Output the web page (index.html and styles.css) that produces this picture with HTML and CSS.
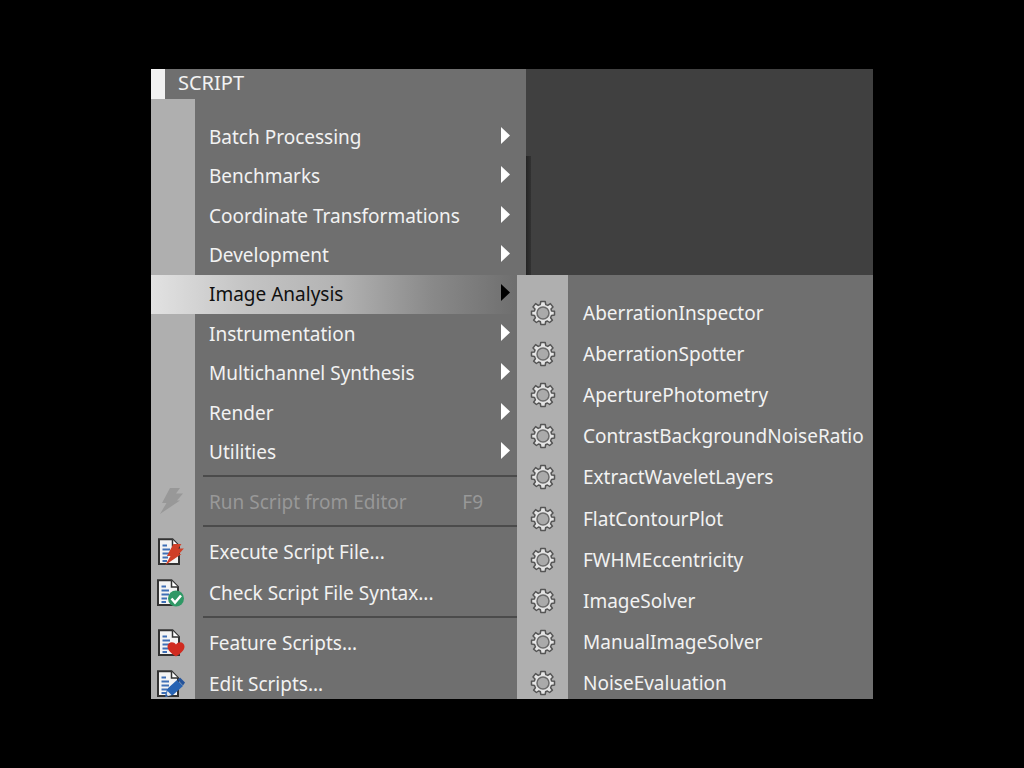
FILE: index.html
```html
<!DOCTYPE html>
<html lang="en">
<head>
<meta charset="utf-8">
<meta name="viewport" content="width=device-width, initial-scale=1">
<title>Script menu</title>
<link rel="stylesheet" href="styles.css">
</head>
<body>
<svg class="defs" aria-hidden="true">
  <symbol id="arrow" viewBox="0 0 9 17"><path d="M0 0 9 8.500 0 17Z" fill="currentColor"/></symbol>
  <symbol id="bolt" viewBox="0 0 24 26"><path d="M10 0H20L16 5.500H23L17 12.500H20L0 26 6.500 15H2Z" fill="currentColor"/></symbol>
  <symbol id="doc" viewBox="0 0 28 28">
    <path d="M2 1.200H15.500L22 8V26H2Z" fill="#f4f4f4" stroke="#333" stroke-width="2"/>
    <path d="M15.500 1.500V8H22" fill="#fff" stroke="#333" stroke-width="1.500"/>
    <path d="M5.500 7.500H10M5.500 11.500H13M5.500 15.500H13M5.500 19.500H11M5.500 23H10" stroke="#3f6fb5" stroke-width="2"/>
  </symbol>
  <symbol id="gear" viewBox="0 0 26 26">
    <path d="M10.800 1.500 H15.200 L15.800 4.600 L17.800 5.400 L20.400 3.600 L23 7 L21 9 L21.600 11 L24.500 11.300 V15 L21.500 15.400 L20.600 17.700 L22.400 20.200 L19.600 22.500 L17.400 21 L15.600 21.800 L15.200 24.500 H10.800 L10.400 21.800 L8.600 21 L6.400 22.500 L3.600 20.200 L5.400 17.700 L4.500 15.400 L1.500 15 V11.300 L4.400 11 L5 9 L3 7 L5.600 3.600 L8.200 5.400 L10.200 4.600Z" fill="#e4e4e4" stroke="#555" stroke-width="1.500" stroke-linejoin="round"/>
    <circle cx="13" cy="13" r="6" fill="#aaa" stroke="#6b6b6b" stroke-width="1.500"/>
  </symbol>
</svg>
<main class="stage">
  <section class="menu">
    <header class="menubar"><button class="menubar-item" type="button">SCRIPT</button></header>
    <div class="menu-body" role="menu" aria-label="Script">
      <div class="groups">
        <button class="item" type="button" role="menuitem"><span>Batch Processing</span><svg class="arrow"><use href="#arrow"/></svg></button>
        <button class="item" type="button" role="menuitem"><span>Benchmarks</span><svg class="arrow"><use href="#arrow"/></svg></button>
        <button class="item" type="button" role="menuitem"><span>Coordinate Transformations</span><svg class="arrow"><use href="#arrow"/></svg></button>
        <button class="item" type="button" role="menuitem"><span>Development</span><svg class="arrow"><use href="#arrow"/></svg></button>
        <button class="item item-active" type="button" role="menuitem" aria-expanded="true"><span>Image Analysis</span><svg class="arrow"><use href="#arrow"/></svg></button>
        <button class="item" type="button" role="menuitem"><span>Instrumentation</span><svg class="arrow"><use href="#arrow"/></svg></button>
        <button class="item" type="button" role="menuitem"><span>Multichannel Synthesis</span><svg class="arrow"><use href="#arrow"/></svg></button>
        <button class="item" type="button" role="menuitem"><span>Render</span><svg class="arrow"><use href="#arrow"/></svg></button>
        <button class="item" type="button" role="menuitem"><span>Utilities</span><svg class="arrow"><use href="#arrow"/></svg></button>
      </div>
      <hr class="separator">
      <button class="item command" type="button" role="menuitem" disabled><svg class="icon" viewBox="0 0 28 28"><use href="#bolt" x="3" y="0" width="24" height="26"/></svg><span>Run Script from Editor</span><kbd class="shortcut">F9</kbd></button>
      <hr class="separator">
      <button class="item command" type="button" role="menuitem"><svg class="icon" viewBox="0 0 28 28"><use href="#doc" width="28" height="28"/><use class="red" href="#bolt" x="8" y="6" width="20" height="21"/></svg><span>Execute Script File...</span></button>
      <button class="item command" type="button" role="menuitem"><svg class="icon" viewBox="0 0 28 28"><use href="#doc" x="-1" width="28" height="28"/><circle cx="19" cy="19.500" r="8" fill="#2f9865"/><path d="m14.500 19.500 3.500 4 6-7" fill="none" stroke="#fff" stroke-width="2.500"/></svg><span>Check Script File Syntax...</span></button>
      <hr class="separator">
      <button class="item command" type="button" role="menuitem"><svg class="icon" viewBox="0 0 28 28"><use href="#doc" width="28" height="28"/><path d="M19 27.500C15 25 10.500 21.500 10.500 17.500 10.500 13 16.500 11.500 19 15.500 21.500 11.500 27.500 13 27.500 17.500 27.500 21.500 23 25 19 27.500Z" fill="#d02b20"/></svg><span>Feature Scripts...</span></button>
      <button class="item command" type="button" role="menuitem"><svg class="icon" viewBox="0 0 28 28"><use href="#doc" x="-1" width="28" height="28"/><path d="M8 27 10 19 20 10 26 16 16 25Z" fill="#2763b3"/><path d="m20.500 9.500 2.500-2 5 5-2 3Z" fill="#24539a"/><path d="M9 26.500 10.500 21 14.500 25Z" fill="#e8e8e8"/><path d="M8 27 9 24 11 26Z" fill="#24539a"/></svg><span>Edit Scripts...</span></button>
    </div>
  </section>
  <div class="workspace"></div>
  <section class="submenu" role="menu" aria-label="Image Analysis">
    <div class="subitems">
      <button class="subitem" type="button" role="menuitem"><svg class="gear"><use href="#gear"/></svg><span>AberrationInspector</span></button>
      <button class="subitem" type="button" role="menuitem"><svg class="gear"><use href="#gear"/></svg><span>AberrationSpotter</span></button>
      <button class="subitem" type="button" role="menuitem"><svg class="gear"><use href="#gear"/></svg><span>AperturePhotometry</span></button>
      <button class="subitem" type="button" role="menuitem"><svg class="gear"><use href="#gear"/></svg><span>ContrastBackgroundNoiseRatio</span></button>
      <button class="subitem" type="button" role="menuitem"><svg class="gear"><use href="#gear"/></svg><span>ExtractWaveletLayers</span></button>
      <button class="subitem" type="button" role="menuitem"><svg class="gear"><use href="#gear"/></svg><span>FlatContourPlot</span></button>
      <button class="subitem" type="button" role="menuitem"><svg class="gear"><use href="#gear"/></svg><span>FWHMEccentricity</span></button>
      <button class="subitem" type="button" role="menuitem"><svg class="gear"><use href="#gear"/></svg><span>ImageSolver</span></button>
      <button class="subitem" type="button" role="menuitem"><svg class="gear"><use href="#gear"/></svg><span>ManualImageSolver</span></button>
      <button class="subitem" type="button" role="menuitem"><svg class="gear"><use href="#gear"/></svg><span>NoiseEvaluation</span></button>
    </div>
  </section>
</main>
</body>
</html>
```
FILE: styles.css
```css
* { box-sizing: border-box; }

body {
  margin: 0;
  height: 100vh;
  padding: 69px 151px;
  background: #000;
  color: #f2f2f2;
  font-family: "Noto Sans", "Open Sans", sans-serif;
  font-size: 19px;
  line-height: 28px;
}

button {
  margin: 0;
  padding: 0;
  border: 0;
  background: none;
  color: inherit;
  font: inherit;
  text-align: left;
  white-space: nowrap;
}

.defs { position: absolute; width: 0; height: 0; }

.stage {
  position: relative;
  display: flex;
  height: 100%;
  overflow: hidden;
  background: #404040;
}

.menu {
  flex: 0 0 375px;
  display: flex;
  flex-direction: column;
  background: #6f6f6f;
}

.menubar {
  flex: none;
  height: 30px;
  border-left: 14px solid #f1f1f1;
  padding-left: 13px;
  font-size: 20px;
}

.menu-body {
  flex: 1 0 auto;
  padding-top: 18px;
  background: linear-gradient(to right, #afafaf 44px, #6f6f6f 44px);
}

.groups {
  display: grid;
  grid-auto-rows: 1fr;
  height: 355px;
}

.item {
  display: flex;
  align-items: center;
  width: 100%;
  padding: 0 16px 0 58px;
}

.item-active {
  color: #101010;
  background: linear-gradient(to right, #e2e2e2, #c4c4c4 25%, #b3b3b3 50%, #898989 75%, #6f6f6f 97%);
}

.arrow {
  width: 9px;
  height: 17px;
  margin: 0 0 3px auto;
  color: #fff;
}

.item-active .arrow { color: #000; }

.separator {
  margin: 3px 0 4px 52px;
  border: 0;
  border-top: 2px solid #4b4b4b;
}

.command {
  height: 41px;
  padding-left: 6px;
}

.command:disabled { color: #989898; }

.icon {
  flex: none;
  width: 28px;
  height: 28px;
  margin-right: 24px;
  overflow: visible;
}

.red { color: #cf3f27; }

.shortcut {
  margin: 0 27px 0 auto;
  font: inherit;
}

.workspace {
  flex: 1;
  padding-top: 87px;
}

.workspace::before {
  content: "";
  display: block;
  width: 5px;
  height: 100%;
  background: linear-gradient(to right, #242424, #323232);
}

.submenu {
  position: absolute;
  top: 206px;
  left: 366px;
  right: 0;
  bottom: 0;
  overflow: hidden;
  padding-top: 17px;
  background: linear-gradient(to right, #afafaf 51px, #6f6f6f 51px);
}

.subitems {
  display: grid;
  grid-auto-rows: 1fr;
  height: 412px;
}

.subitem {
  display: flex;
  align-items: center;
  gap: 27px;
  padding-left: 13px;
}

.gear {
  flex: none;
  width: 26px;
  height: 26px;
}
```
